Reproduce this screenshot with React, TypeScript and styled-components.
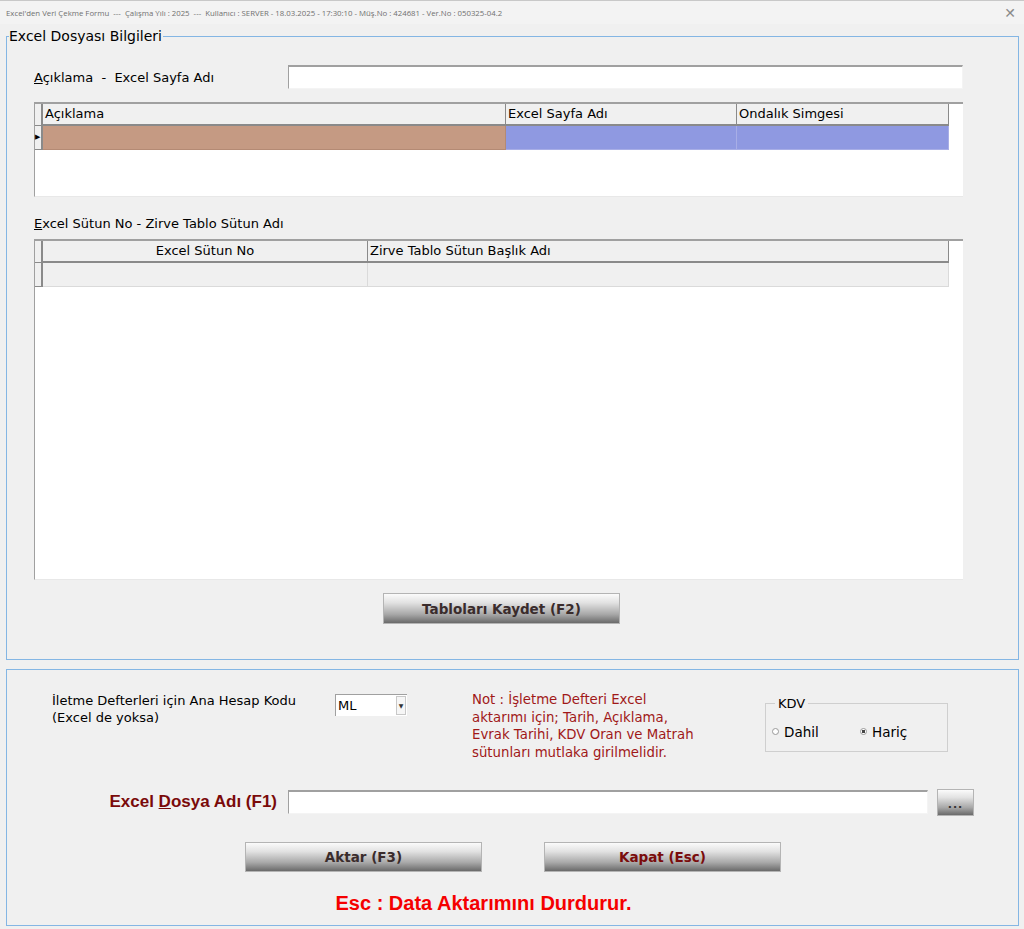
import styled, { createGlobalStyle } from 'styled-components';

const GlobalStyle = createGlobalStyle`
  html, body {
    margin: 0;
    padding: 0;
    background: #f0f0f0;
  }
  body {
    font-family: Tahoma, "DejaVu Sans", "Noto Sans", sans-serif;
    font-size: 13px;
    color: #000;
  }
`;

const Window = styled.div`
  width: 1024px;
  height: 929px;
  display: flex;
  flex-direction: column;
  background: #f0f0f0;
  box-sizing: border-box;
  overflow: hidden;
`;

const TitleBar = styled.div`
  height: 24px;
  flex: none;
  display: flex;
  align-items: center;
  justify-content: space-between;
  padding: 0 6px;
  background: #f3f3f3;
  border-top: 1px solid #c8c8c8;
  box-sizing: border-box;
  font-family: "Open Sans", "Noto Sans", sans-serif;
  font-size: 7.8px;
  color: #707070;
`;

const CloseX = styled.span`
  font-size: 14px;
  color: #8a8a8a;
  margin-right: 2px;
  font-family: "DejaVu Sans", sans-serif;
`;

const Body = styled.div`
  flex: 1;
  display: flex;
  flex-direction: column;
  padding: 4px 5px 0 6px;
  gap: 9px;
`;

const Group = styled.fieldset<{ $h: number }>`
  margin: 0;
  height: ${({ $h }) => $h}px;
  box-sizing: border-box;
  border: 1px solid #84b6e4;
  padding: 0;
  display: flex;
  flex-direction: column;
`;

const Legend = styled.legend`
  font-size: 14px;
  padding: 0 1px 0 0;
  margin-left: 2px;
  color: #000;
`;

const Inner = styled.div`
  display: flex;
  flex-direction: column;
  padding: 0 55px 0 27px;
`;

const LabelRow = styled.div`
  display: flex;
  align-items: center;
  margin-top: 21px;
  height: 24px;
`;

const FieldLabel = styled.label<{ $w?: number }>`
  width: ${({ $w }) => ($w ? `${$w}px` : 'auto')};
  flex: none;
  white-space: pre;
  font-size: 13px;
`;

const TextBox = styled.div<{ $w: number; $h: number }>`
  width: ${({ $w }) => $w}px;
  height: ${({ $h }) => $h}px;
  flex: none;
  box-sizing: border-box;
  background: #fff;
  border-top: 2px solid #a0a0a0;
  border-left: 1px solid #a0a0a0;
  border-right: 1px solid #f4f4f4;
  border-bottom: 1px solid #f4f4f4;
`;

const Grid = styled.div<{ $h: number; $mt: number }>`
  margin-top: ${({ $mt }) => $mt}px;
  height: ${({ $h }) => $h}px;
  width: 929px;
  box-sizing: border-box;
  background: #fff;
  border-top: 2px solid #a0a0a0;
  border-left: 1px solid #a0a0a0;
  border-bottom: 1px solid #e8e8e8;
`;

const GridRow = styled.div<{ $cols: string; $h: number }>`
  display: grid;
  grid-template-columns: ${({ $cols }) => $cols};
  height: ${({ $h }) => $h}px;
  width: 914px;
`;

const HeadCell = styled.div<{ $center?: boolean }>`
  background: #f0f0f0;
  border-right: 1px solid #8a8a8a;
  border-bottom: 2px solid #8a8a8a;
  font-size: 13px;
  line-height: 19px;
  padding: 0 2px;
  text-align: ${({ $center }) => ($center ? 'center' : 'left')};
  white-space: nowrap;
  overflow: hidden;
`;

const Indicator = styled.div`
  background: #f0f0f0;
  border-right: 2px solid #8a8a8a;
  border-bottom: 1px solid #8a8a8a;
  display: flex;
  align-items: center;
  justify-content: flex-start;
  font-size: 7px;
  line-height: 1;
`;

const DataCell = styled.div<{ $bg: string; $line: string }>`
  background: ${({ $bg }) => $bg};
  border-right: 1px solid ${({ $line }) => $line};
  border-bottom: 1px solid ${({ $line }) => $line};
`;

const SectionLabel = styled.div`
  margin-top: 18px;
  font-size: 13px;
  height: 18px;
  line-height: 18px;
`;

const ButtonRow = styled.div<{ $mt: number; $gap: number; $pl: number }>`
  display: flex;
  margin-top: ${({ $mt }) => $mt}px;
  gap: ${({ $gap }) => $gap}px;
  padding-left: ${({ $pl }) => $pl}px;
`;

const GradButton = styled.button<{ $w: number; $h: number; $red?: boolean }>`
  width: ${({ $w }) => $w}px;
  height: ${({ $h }) => $h}px;
  flex: none;
  padding: 0;
  border: 1px solid #b4b4b4;
  background: linear-gradient(#fbfbfb 0%, #e2e2e2 30%, #a8a8a8 70%, #6a6a6a 100%);
  font-family: Tahoma, "DejaVu Sans", sans-serif;
  font-weight: bold;
  font-size: 13.5px;
  color: ${({ $red }) => ($red ? '#7a0c0c' : '#3a2c2c')};
  cursor: pointer;
`;

const Row1 = styled.div`
  display: grid;
  grid-template-columns: 283px 137px 293px 183px;
  padding-left: 45px;
  margin-top: 21px;
  height: 80px;
`;

const MultiLabel = styled.div`
  font-size: 13px;
  line-height: 17px;
  padding-top: 1px;
`;

const Select = styled.div`
  width: 72px;
  height: 22px;
  box-sizing: border-box;
  margin-top: 3px;
  background: #fff;
  border-top: 1px solid #a0a0a0;
  border-left: 1px solid #a0a0a0;
  display: flex;
  align-items: center;
  justify-content: space-between;
  font-size: 13px;
  padding-left: 2px;
`;

const SelectArrow = styled.span`
  width: 8px;
  height: 17px;
  margin-right: 1px;
  border: 1px solid #c8c8c8;
  background: #f6f6f6;
  display: flex;
  align-items: center;
  justify-content: center;
  font-size: 6px;
  color: #333;
`;

const Note = styled.div`
  color: #a01818;
  font-size: 13.3px;
  line-height: 17.7px;
  padding-top: 0;
`;

const KdvBox = styled.fieldset`
  margin: 5px 0 0;
  height: 56px;
  box-sizing: border-box;
  border: 1px solid #cfcfcf;
  padding: 0 0 0 6px;
  display: flex;
  align-items: center;
`;

const KdvLegend = styled.legend`
  font-size: 13px;
  padding: 0 3px;
  margin-left: 3px;
`;

const Radio = styled.label<{ $w: number }>`
  width: ${({ $w }) => $w}px;
  display: flex;
  align-items: center;
  gap: 5px;
  font-size: 13.5px;
  margin-top: 1px;
`;

const RadioDot = styled.span<{ $on?: boolean }>`
  width: 5px;
  height: 5px;
  border-radius: 50%;
  border: 1px solid #9a9a9a;
  background: ${({ $on }) => ($on ? 'radial-gradient(#444 40%, #fff 45%)' : '#fff')};
`;

const FileRow = styled.div`
  display: flex;
  align-items: center;
  margin-top: 17px;
  height: 28px;
`;

const FileLabel = styled.div`
  width: 270px;
  flex: none;
  text-align: right;
  font-family: "Liberation Sans", Arial, sans-serif;
  font-weight: bold;
  font-size: 17px;
  color: #7a0a0a;
  u {
    text-decoration-color: #7a0a0a;
  }
`;

const Gap = styled.span<{ $w: number }>`
  width: ${({ $w }) => $w}px;
  flex: none;
`;

const DotsButton = styled(GradButton)`
  font-size: 11px;
  color: #333;
  letter-spacing: 1px;
  padding-top: 4px;
`;

const Warning = styled.div`
  margin-top: 20px;
  text-align: center;
  padding-right: 58px;
  font-family: "Liberation Sans", Arial, sans-serif;
  font-weight: bold;
  font-size: 20px;
  color: #f50000;
`;

const App = () => {
  return (
    <>
      <GlobalStyle />
      <Window>
        <TitleBar>
          <span>
            Excel'den Veri Çekme Formu &nbsp;--- &nbsp;Çalışma Yılı : 2025 &nbsp;--- &nbsp;Kullanıcı : SERVER - 18.03.2025 - 17:30:10 - Müş.No : 424681 - Ver.No : 050325-04.2
          </span>
          <CloseX>✕</CloseX>
        </TitleBar>
        <Body>
          <Group $h={632}>
            <Legend>Excel Dosyası Bilgileri</Legend>
            <Inner>
              <LabelRow>
                <FieldLabel $w={254}>
                  <u>A</u>çıklama  -  Excel Sayfa Adı
                </FieldLabel>
                <TextBox $w={675} $h={24} />
              </LabelRow>
              <Grid $h={95} $mt={13}>
                <GridRow $cols="8px 463px 231px 212px" $h={22}>
                  <Indicator />
                  <HeadCell>Açıklama</HeadCell>
                  <HeadCell>Excel Sayfa Adı</HeadCell>
                  <HeadCell>Ondalık Simgesi</HeadCell>
                </GridRow>
                <GridRow $cols="8px 463px 231px 212px" $h={24}>
                  <Indicator>▶</Indicator>
                  <DataCell $bg="#c59a83" $line="#b48a74" />
                  <DataCell $bg="#8f99e1" $line="#a8aee6" />
                  <DataCell $bg="#8f99e1" $line="#a8aee6" />
                </GridRow>
              </Grid>
              <SectionLabel>
                <u>E</u>xcel Sütun No - Zirve Tablo Sütun Adı
              </SectionLabel>
              <Grid $h={341} $mt={6}>
                <GridRow $cols="8px 325px 581px" $h={22}>
                  <Indicator />
                  <HeadCell $center>Excel Sütun No</HeadCell>
                  <HeadCell>Zirve Tablo Sütun Başlık Adı</HeadCell>
                </GridRow>
                <GridRow $cols="8px 325px 581px" $h={24}>
                  <Indicator />
                  <DataCell $bg="#f0f0f0" $line="#dadada" />
                  <DataCell $bg="#f0f0f0" $line="#dadada" />
                </GridRow>
              </Grid>
              <ButtonRow $mt={13} $gap={0} $pl={349}>
                <GradButton $w={237} $h={31}>
                  Tabloları Kaydet (F2)
                </GradButton>
              </ButtonRow>
            </Inner>
          </Group>
          <Group $h={257}>
            <Row1>
              <MultiLabel>
                İletme Defterleri için Ana Hesap Kodu
                <br />
                (Excel de yoksa)
              </MultiLabel>
              <div>
                <Select>
                  ML
                  <SelectArrow>▼</SelectArrow>
                </Select>
              </div>
              <Note>
                Not : İşletme Defteri Excel
                <br />
                aktarımı için; Tarih, Açıklama,
                <br />
                Evrak Tarihi, KDV Oran ve Matrah
                <br />
                sütunları mutlaka girilmelidir.
              </Note>
              <div>
                <KdvBox>
                  <KdvLegend>KDV</KdvLegend>
                  <Radio $w={88}>
                    <RadioDot />
                    Dahil
                  </Radio>
                  <Radio $w={80}>
                    <RadioDot $on />
                    Hariç
                  </Radio>
                </KdvBox>
              </div>
            </Row1>
            <FileRow>
              <FileLabel>
                Excel <u>D</u>osya Adı (F1)
              </FileLabel>
              <Gap $w={11} />
              <TextBox $w={640} $h={24} />
              <Gap $w={9} />
              <DotsButton $w={37} $h={27}>
                ...
              </DotsButton>
            </FileRow>
            <ButtonRow $mt={26} $gap={62} $pl={238}>
              <GradButton $w={237} $h={30}>
                Aktar (F3)
              </GradButton>
              <GradButton $w={237} $h={30} $red>
                Kapat (Esc)
              </GradButton>
            </ButtonRow>
            <Warning>Esc : Data Aktarımını Durdurur.</Warning>
          </Group>
        </Body>
      </Window>
    </>
  );
};

export default App;
